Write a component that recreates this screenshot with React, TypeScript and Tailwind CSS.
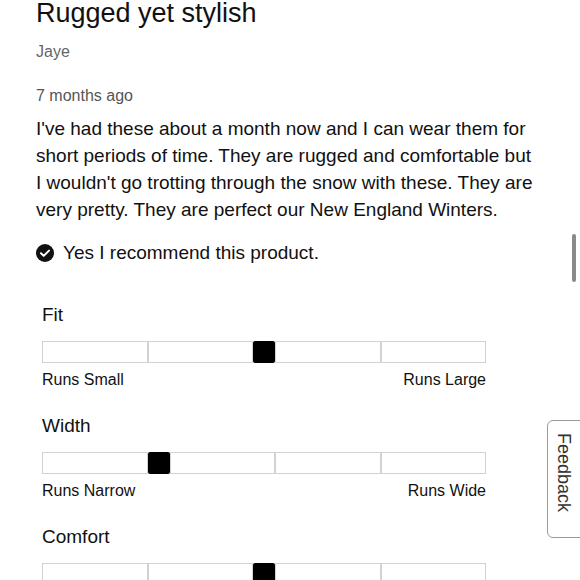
import React from "react";

type Scale = {
    label: string;
    low: string;
    high: string;
    pos: number; // thumb sits after this many segments
};

const scales: Scale[] = [
    { label: "Fit", low: "Runs Small", high: "Runs Large", pos: 2 },
    { label: "Width", low: "Runs Narrow", high: "Runs Wide", pos: 1 },
    { label: "Comfort", low: "Uncomfortable", high: "Very Comfortable", pos: 2 },
];

function CheckCircle() {
    return (
        <svg width="18" height="18" viewBox="0 0 18 18" className="shrink-0">
            <circle cx="9" cy="9" r="9" fill="#111" />
            <path d="M5 9.3l2.7 2.6L13 6.6" fill="none" stroke="#fff" strokeWidth="2" strokeLinecap="round" strokeLinejoin="round" />
        </svg>
    );
}

function ScaleBar({ s }: { s: Scale }) {
    const cells = [0, 1, 2, 3];
    return (
        <div className="mt-[22px] first:mt-[35px] w-[444px] ml-[6px]">
            <div className="text-[19px] leading-[27px] text-[#111]">{s.label}</div>
            <div className="mt-[13px] flex h-[22px]">
                {cells.map((i) => (
                    <React.Fragment key={i}>
                        {i === s.pos && <div className="w-[22px] h-[22px] bg-black rounded-[2px] shrink-0" />}
                        <div className="flex-1 border border-[#d2d2d2] bg-white" />
                    </React.Fragment>
                ))}
            </div>
            <div className="mt-[7px] flex justify-between text-[16px] leading-[20px] text-[#111]">
                <span>{s.low}</span>
                <span>{s.high}</span>
            </div>
        </div>
    );
}

export default function App() {
    return (
        <div className="relative w-[580px] h-[580px] overflow-hidden bg-white font-['Liberation_Sans',Arial,sans-serif]">
            <div className="pl-[36px]">
                <h1 className="-mt-[3px] text-[27px] leading-[32px] text-[#111] font-normal">Rugged yet stylish</h1>
                <div className="mt-[13px] text-[16px] leading-[20px] text-[#666]">Jaye</div>
                <div className="mt-[24px] text-[16px] leading-[20px] text-[#555]">7 months ago</div>
                <p className="mt-[9px] w-[500px] text-[19px] leading-[27px] text-[#111]">
                    I've had these about a month now and I can wear them for short periods of time. They are rugged and comfortable but I wouldn't go trotting through the snow with these. They are very pretty. They are perfect our New England Winters.
                </p>
                <div className="mt-[16px] flex items-center gap-[9px] text-[19px] leading-[27px] text-[#111]">
                    <CheckCircle />
                    <span>Yes I recommend this product.</span>
                </div>
                <div className="flex flex-col">
                    {scales.map((s) => (
                        <ScaleBar key={s.label} s={s} />
                    ))}
                </div>
            </div>

            {/* scrollbar */}
            <div className="absolute left-[572px] top-[234px] w-[4px] h-[48px] rounded-full bg-[#8a8a8a]" />

            {/* feedback tab */}
            <div className="absolute left-[547px] top-[420px] w-[40px] h-[118px] rounded-l-[6px] border border-[#9a9a9a] bg-white flex items-start pl-[6px] pt-[12px]">
                <span className="[writing-mode:vertical-rl] text-[18px] leading-[20px] text-[#333]">Feedback</span>
            </div>
        </div>
    );
}
